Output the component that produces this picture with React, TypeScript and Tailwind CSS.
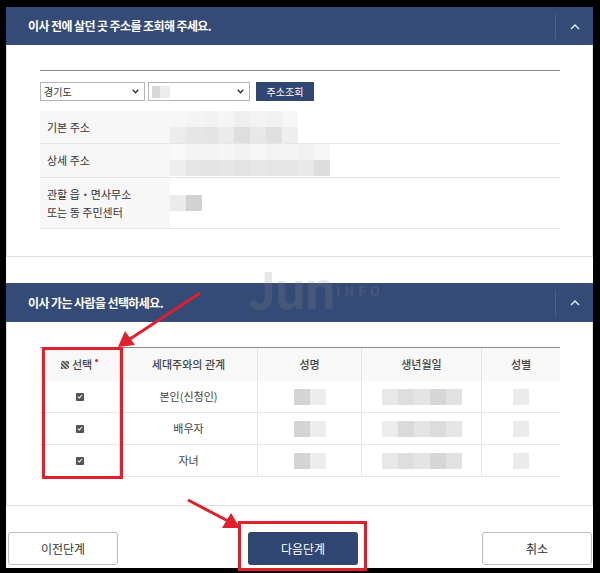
const font = { fontFamily: '"Noto Sans CJK KR", "Noto Sans", sans-serif' }

function Chevron() {
  return (
    <svg width="10" height="7" viewBox="0 0 10 7" fill="none">
      <path d="M1 6 L5 2 L9 6" stroke="#e8edf5" strokeWidth="1.4" />
    </svg>
  )
}

function PanelHeader({ title }: { title: string }) {
  return (
    <div className="flex items-center bg-[#354b77] text-white">
      <div className="pl-[22px] text-[12px] font-bold tracking-[-0.6px]">{title}</div>
      <div className="ml-auto h-[26px] w-px bg-[#4b5f8c]" />
      <div className="flex w-[37px] items-center justify-center">
        <Chevron />
      </div>
    </div>
  )
}

function Blocks({ shades, size = 16 }: { shades: string[]; size?: number }) {
  return (
    <div className="flex">
      {shades.map((c, i) => (
        <div key={i} style={{ background: c, width: size, height: size }} />
      ))}
    </div>
  )
}

function SelectBox({ width, children }: { width: string; children?: React.ReactNode }) {
  return (
    <div className={`flex h-[19px] items-center border border-[#b5b5b5] bg-white pl-[3px] pr-[5px] text-[10px] text-[#333] ${width}`}>
      <div className="flex-1">{children}</div>
      <svg width="7" height="5" viewBox="0 0 7 5">
        <path d="M0.8 0.8 L3.5 3.8 L6.2 0.8" stroke="#333" strokeWidth="1.4" fill="none" />
      </svg>
    </div>
  )
}

function CheckIcon() {
  return (
    <div className="flex h-[8px] w-[8px] items-center justify-center rounded-[1px] bg-[#555]">
      <svg width="6" height="5" viewBox="0 0 6 5">
        <path d="M1 2.6 L2.4 4 L5 1" stroke="#fff" strokeWidth="1.1" fill="none" />
      </svg>
    </div>
  )
}

const people = ['본인(신청인)', '배우자', '자녀']

export default function App() {
  return (
    <div className="h-[573px] w-[600px] bg-black pb-[5px] pl-[6px] pr-[7px] pt-[7px]" style={font}>
      <div className="relative flex h-full flex-col bg-white">
        {/* panel 1 */}
        <div className="h-[38px] [&>div]:h-full">
          <PanelHeader title="이사 전에 살던 곳 주소를 조회해 주세요." />
        </div>
        <div className="h-[212px] border border-t-0 border-[#dedede] pl-[33px] pr-[32px] pt-[25px]">
          <div className="h-px bg-[#8c8c8c]" />
          <div className="mt-[11px] flex items-center">
            <SelectBox width="w-[105px]">경기도</SelectBox>
            <div className="ml-[3px]">
              <SelectBox width="w-[102px]">
                <div className="flex">
                  <div className="h-[12px] w-[8px] bg-[#d8d8d8]" />
                  <div className="h-[12px] w-[10px] bg-[#ececec]" />
                </div>
              </SelectBox>
            </div>
            <div className="ml-[6px] flex h-[19px] w-[58px] items-center justify-center bg-[#304673] text-[10px] text-white">
              주소조회
            </div>
          </div>
          <div className="mt-[10px] text-[11px] text-[#333]">
            <div className="grid h-[33px] grid-cols-[130px_1fr] border-b border-[#e6e6e6]">
              <div className="flex items-center bg-[#f7f7f7] pl-[7px]">기본 주소</div>
              <div className="flex flex-col">
                <Blocks shades={['#f6f6f6', '#f4f4f4', '#f2f2f2', '#f5f5f5', '#efefef', '#f3f3f3', '#f1f1f1', '#f7f7f7']} />
                <Blocks shades={['#ececec', '#e6e6e6', '#e4e4e4', '#ebebeb', '#dedede', '#e8e8e8', '#e0e0e0', '#eeeeee']} />
              </div>
            </div>
            <div className="grid h-[34px] grid-cols-[130px_1fr] border-b border-[#e6e6e6]">
              <div className="flex items-center bg-[#f7f7f7] pl-[7px]">상세 주소</div>
              <div className="flex flex-col">
                <Blocks shades={['#f9f9f9', '#f4f4f4', '#f3f3f3', '#f5f5f5', '#f2f2f2', '#f6f6f6', '#f3f3f3', '#f4f4f4', '#f1f1f1', '#f6f6f6']} />
                <Blocks shades={['#eeeeee', '#e5e5e5', '#e4e4e4', '#e6e6e6', '#e3e3e3', '#e7e7e7', '#e5e5e5', '#e6e6e6', '#e9e9e9', '#dddddd']} />
              </div>
            </div>
            <div className="grid h-[51px] grid-cols-[130px_1fr] border-b border-[#e6e6e6]">
              <div className="flex flex-col justify-center gap-[4px] bg-[#f7f7f7] pl-[7px] leading-[14px]">
                <div>관할 읍・면사무소</div>
                <div>또는 동 주민센터</div>
              </div>
              <div className="flex items-center">
                <Blocks shades={['#ebebeb', '#d2d2d2']} />
              </div>
            </div>
          </div>
        </div>

        {/* panel 2 */}
        <div className="mt-[26px] h-[39px] [&>div]:h-full">
          <PanelHeader title="이사 가는 사람을 선택하세요." />
        </div>
        <div className="h-[184px] border border-t-0 border-[#dedede] pl-[33px] pr-[32px] pt-[25px]">
          <div className="border-t border-[#8c8c8c] text-[11px] text-[#444]">
            <div className="grid h-[33px] grid-cols-[80px_138px_104px_120px_78px] bg-[#f8f8f8] font-medium">
              <div className="flex items-center justify-center gap-[3px] border-r border-[#e3e3e3]">
                <div className="h-[8px] w-[8px] bg-[repeating-linear-gradient(45deg,#555_0_1.5px,#bbb_1.5px_3px)]" />
                <span>선택</span>
                <span className="mb-[8px] h-[3px] w-[3px] rounded-full bg-[#e0202a]" />
              </div>
              <div className="flex items-center justify-center border-r border-[#e3e3e3]">세대주와의 관계</div>
              <div className="flex items-center justify-center border-r border-[#e3e3e3]">성명</div>
              <div className="flex items-center justify-center border-r border-[#e3e3e3]">생년월일</div>
              <div className="flex items-center justify-center">성별</div>
            </div>
            {people.map((p, i) => (
              <div key={p} className="grid h-[32px] grid-cols-[80px_138px_104px_120px_78px] border-b border-[#e6e6e6]">
                <div className="flex items-center justify-center border-r border-[#e6e6e6]">
                  <CheckIcon />
                </div>
                <div className="flex items-center justify-center border-r border-[#e6e6e6]">{p}</div>
                <div className="flex items-center justify-center border-r border-[#e6e6e6]">
                  <Blocks shades={['#d4d4d4', '#ececec']} />
                </div>
                <div className="flex items-center justify-center border-r border-[#e6e6e6]">
                  <Blocks
                    shades={
                      i === 1
                        ? ['#ececec', '#dadada', '#e4e4e4', '#dcdcdc', '#e6e6e6']
                        : ['#e8e8e8', '#dedede', '#e4e4e4', '#d6d6d6', '#e2e2e2']
                    }
                  />
                </div>
                <div className="flex items-center justify-center">
                  <Blocks shades={['#ebebeb']} />
                </div>
              </div>
            ))}
          </div>
        </div>

        {/* buttons */}
        <div className="mt-[26px] flex text-[12px]">
          <div className="ml-[2px] flex h-[33px] w-[110px] items-center justify-center rounded-[3px] border border-[#bdbdbd] bg-white text-[#333]">
            이전단계
          </div>
          <div className="ml-[130px] flex h-[33px] w-[110px] items-center justify-center rounded-[3px] bg-[#304673] text-white">
            다음단계
          </div>
          <div className="ml-auto mr-[1px] flex h-[33px] w-[110px] items-center justify-center rounded-[3px] border border-[#bdbdbd] bg-white text-[#333]">
            취소
          </div>
        </div>

        {/* watermark */}
        <div className="pointer-events-none absolute left-[242px] top-[255px] flex items-end text-[#8a8a8a] opacity-20">
          <span className="text-[50px] font-bold leading-[50px] tracking-[-2px]">Jun</span>
          <span className="mb-[12px] ml-[2px] text-[13px] font-bold tracking-[4px]">INFO</span>
        </div>

        {/* annotation boxes */}
        <div className="pointer-events-none absolute left-[36px] top-[340px] h-[132px] w-[81px] border-[3px] border-[#e0202a]" />
        <div className="pointer-events-none absolute left-[232px] top-[514px] h-[50px] w-[129px] border-[3px] border-[#e0202a]" />

        {/* arrows */}
        <svg className="pointer-events-none absolute left-0 top-0" width="587" height="561">
          <line x1="194" y1="286" x2="124" y2="332" stroke="#e0202a" strokeWidth="3" />
          <polygon points="112,340 119,324 129,338" fill="#e0202a" />
          <line x1="182" y1="493" x2="222" y2="514" stroke="#e0202a" strokeWidth="3" />
          <polygon points="234,521 216,521 225,506" fill="#e0202a" />
        </svg>
      </div>
    </div>
  )
}
